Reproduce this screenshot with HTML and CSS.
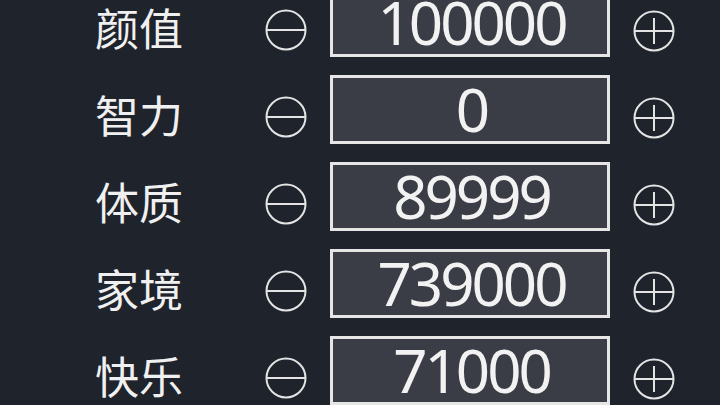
FILE: index.html
```html
<!DOCTYPE html>
<html lang="zh">
<head>
<meta charset="utf-8">
<link rel="stylesheet" href="styles.css">
</head>
<body>
<div class="list">
  <div class="row">
    <span class="label">颜值</span>
    <svg class="btn minus" viewBox="0 0 42 42"><circle cx="21" cy="21" r="19.5"/><line x1="2" y1="21" x2="40" y2="21"/></svg>
    <div class="box">100000</div>
    <svg class="btn plus" viewBox="0 0 42 42"><circle cx="21" cy="21" r="19.5"/><line x1="2" y1="21" x2="40" y2="21"/><line x1="21" y1="8" x2="21" y2="34"/></svg>
  </div>
  <div class="row">
    <span class="label">智力</span>
    <svg class="btn minus" viewBox="0 0 42 42"><circle cx="21" cy="21" r="19.5"/><line x1="2" y1="21" x2="40" y2="21"/></svg>
    <div class="box">0</div>
    <svg class="btn plus" viewBox="0 0 42 42"><circle cx="21" cy="21" r="19.5"/><line x1="2" y1="21" x2="40" y2="21"/><line x1="21" y1="8" x2="21" y2="34"/></svg>
  </div>
  <div class="row">
    <span class="label">体质</span>
    <svg class="btn minus" viewBox="0 0 42 42"><circle cx="21" cy="21" r="19.5"/><line x1="2" y1="21" x2="40" y2="21"/></svg>
    <div class="box">89999</div>
    <svg class="btn plus" viewBox="0 0 42 42"><circle cx="21" cy="21" r="19.5"/><line x1="2" y1="21" x2="40" y2="21"/><line x1="21" y1="8" x2="21" y2="34"/></svg>
  </div>
  <div class="row">
    <span class="label">家境</span>
    <svg class="btn minus" viewBox="0 0 42 42"><circle cx="21" cy="21" r="19.5"/><line x1="2" y1="21" x2="40" y2="21"/></svg>
    <div class="box">739000</div>
    <svg class="btn plus" viewBox="0 0 42 42"><circle cx="21" cy="21" r="19.5"/><line x1="2" y1="21" x2="40" y2="21"/><line x1="21" y1="8" x2="21" y2="34"/></svg>
  </div>
  <div class="row">
    <span class="label">快乐</span>
    <svg class="btn minus" viewBox="0 0 42 42"><circle cx="21" cy="21" r="19.5"/><line x1="2" y1="21" x2="40" y2="21"/></svg>
    <div class="box">71000</div>
    <svg class="btn plus" viewBox="0 0 42 42"><circle cx="21" cy="21" r="19.5"/><line x1="2" y1="21" x2="40" y2="21"/><line x1="21" y1="8" x2="21" y2="34"/></svg>
  </div>
</div>
</body>
</html>
```
FILE: styles.css
```css
html, body {
  margin: 0;
  padding: 0;
  width: 720px;
  height: 405px;
  overflow: hidden;
  background: #1f232c;
}
.list {
  margin-top: -12px;
  display: flex;
  flex-direction: column;
  gap: 19px;
  padding-left: 95px;
}
.row {
  display: flex;
  align-items: center;
  height: 68px;
}
.label {
  width: 170px;
  font-family: "Noto Sans CJK SC", "Noto Sans", sans-serif;
  font-size: 44px;
  line-height: 1;
  color: #f0f0f0;
  margin-top: 10px;
}
.btn {
  width: 42px;
  height: 42px;
  fill: none;
  stroke: #e4e4e4;
  stroke-width: 2;
  margin-top: 15px;
  flex: none;
}
.minus {
  margin-right: 23px;
}
.plus {
  margin-left: 23px;
  margin-top: 17px;
}
.box {
  box-sizing: border-box;
  width: 280px;
  height: 69px;
  border: 3px solid #e6e6e6;
  background: #3a3d45;
  color: #f2f2f2;
  font-family: "Noto Sans", sans-serif;
  font-size: 60px;
  letter-spacing: -3px;
  padding-left: 3px;
  line-height: 63px;
  text-align: center;
  flex: none;
}
```
